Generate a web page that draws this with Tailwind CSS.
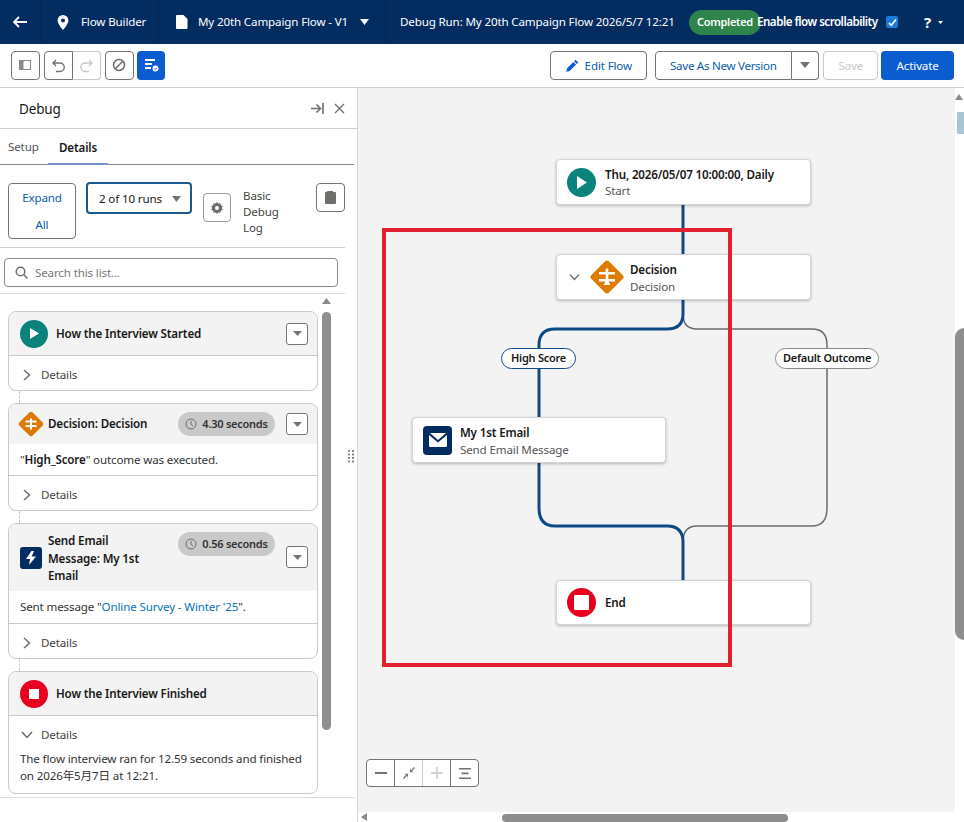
<!DOCTYPE html>
<html lang="en">
<head>
    <meta charset="UTF-8">
    <title>Flow Builder</title>
    <script src="https://cdn.jsdelivr.net/npm/@tailwindcss/browser@4"></script>
</head>
<body class="h-screen w-[964px] overflow-hidden bg-white font-['Noto_Sans','Noto_Sans_CJK_JP',sans-serif] text-[11.6px] tracking-[-0.15px] text-[#181818]">

    <!-- Top bar -->
    <header class="flex h-[44px] items-center bg-[#032d60] text-white">
        <div class="flex h-full w-[41px] shrink-0 items-center justify-center border-r border-[#0b2347]">
            <svg class="h-[16px] w-[16px]" viewBox="0 0 16 16" fill="none" stroke="white" stroke-width="1.8"><path d="M15 8H2M7 3L2 8l5 5"/></svg>
        </div>
        <div class="flex h-full w-[118px] shrink-0 items-center border-r border-[#0b2347] pl-[16px]">
            <svg class="h-[15px] w-[12px]" viewBox="0 0 12 15"><path fill="white" fill-rule="evenodd" d="M6 0a5.4 5.4 0 0 0-5.4 5.4C.6 9 6 15 6 15s5.400-6 5.400-9.600A5.400 5.400 0 0 0 6 0zm0 7.400a2 2 0 1 1 0-4 2 2 0 0 1 0 4z"/></svg>
            <span class="ml-[12px] whitespace-nowrap">Flow Builder</span>
        </div>
        <div class="flex h-full w-[227px] shrink-0 items-center border-r border-[#0b2347] pl-[17px]">
            <svg class="h-[14px] w-[12px]" viewBox="0 0 12 14"><path fill="white" d="M1 0h6.500L11.500 4v9a1 1 0 0 1-1 1H1a1 1 0 0 1-1-1V1a1 1 0 0 1 1-1z"/></svg>
            <span class="ml-[10px] whitespace-nowrap">My 20th Campaign Flow - V1</span>
            <svg class="ml-[12px] h-[6px] w-[9px]" viewBox="0 0 9 6"><path fill="white" d="M0 0h9L4.500 6z"/></svg>
        </div>
        <span class="ml-[14px] w-[289px] shrink-0 whitespace-nowrap">Debug Run: My 20th Campaign Flow 2026/5/7 12:21</span>
        <span class="flex h-[25px] w-[72px] shrink-0 items-center justify-center rounded-full bg-[#2e844a] text-[11px] font-semibold tracking-[-0.3px]">Completed</span>
        <span class="ml-[-4px] w-[129px] shrink-0 whitespace-nowrap font-semibold tracking-[-0.5px]">Enable flow scrollability</span>
        <span class="flex h-[12px] w-[12px] shrink-0 items-center justify-center rounded-[2px] bg-[#1b7ad6]">
            <svg class="h-[9px] w-[9px]" viewBox="0 0 9 9" fill="none" stroke="white" stroke-width="1.600"><path d="M1 5l2.300 2.300L8 1.500"/></svg>
        </span>
        <span class="ml-[26px] text-[15px] font-bold">?</span>
        <svg class="ml-[7px] h-[3px] w-[5px]" viewBox="0 0 5 3"><path fill="white" d="M0 0h5L2.500 3z"/></svg>
    </header>

    <!-- Toolbar -->
    <div class="flex h-[44px] items-center border-b border-[#cfcfcf] pb-[1px] pl-[11px] pr-[10px]">
        <button class="flex h-[29px] w-[29px] items-center justify-center rounded-[4px] border border-[#747474]">
            <svg class="h-[12px] w-[12px]" viewBox="0 0 12 12"><rect x="0.500" y="1.500" width="11" height="9" fill="none" stroke="#8a8a8a"/><rect x="1" y="2" width="3.500" height="8" fill="#8a8a8a"/></svg>
        </button>
        <button class="ml-[4px] flex h-[29px] w-[29px] items-center justify-center rounded-l-[4px] border border-[#747474]">
            <svg class="h-[15px] w-[15px]" viewBox="0 0 15 15" fill="none" stroke="#706e6b" stroke-width="1.300"><path d="M5 2L2 5l3 3M2 5h7a3.700 3.700 0 0 1 0 8.500H5"/></svg>
        </button>
        <button class="flex h-[29px] w-[28px] items-center justify-center rounded-r-[4px] border border-l-0 border-[#c9c9c9]">
            <svg class="h-[15px] w-[15px]" viewBox="0 0 15 15" fill="none" stroke="#c9c9c9" stroke-width="1.300"><path d="M10 2l3 3-3 3M13 5H6a3.700 3.700 0 0 0 0 8.500h4"/></svg>
        </button>
        <button class="ml-[4px] flex h-[29px] w-[29px] items-center justify-center rounded-[4px] border border-[#747474]">
            <svg class="h-[14px] w-[14px]" viewBox="0 0 14 14" fill="none" stroke="#706e6b" stroke-width="1.500"><circle cx="7" cy="7" r="5.500"/><path d="M3.200 10.800l7.600-7.600"/></svg>
        </button>
        <button class="ml-[3px] flex h-[29px] w-[29px] items-center justify-center rounded-[4px] bg-[#0b5cce]">
            <svg class="h-[15px] w-[15px]" viewBox="0 0 15 15"><path fill="white" d="M1 1h10v2H1zM1 5h7v2H1zM1 9h6v2H1z"/><circle cx="11.500" cy="10.500" r="3" fill="white"/><path d="M10 10.500l1 1 2-2" stroke="#0b5cce" fill="none"/></svg>
        </button>

        <button class="ml-[385px] flex h-[29px] w-[97px] items-center justify-center gap-[6px] rounded-[4px] border border-[#747474] pt-[1px] text-[#0b5cab]">
            <svg class="h-[13px] w-[13px]" viewBox="0 0 13 13"><path fill="#0b5cce" d="M9.500.8l2.700 2.700-1.400 1.400L8.100 2.200zM7.400 2.900l2.700 2.700-6.500 6.500L.3 12.700l.6-3.300z"/></svg>
            Edit Flow
        </button>
        <button class="ml-[8px] flex h-[29px] w-[137px] items-center justify-center rounded-l-[4px] border border-[#747474] pt-[1px] tracking-[-0.3px] text-[#0b5cab]">Save As New Version</button>
        <button class="flex h-[29px] w-[28px] items-center justify-center rounded-r-[4px] border border-l-0 border-[#747474]">
            <svg class="h-[6px] w-[10px]" viewBox="0 0 10 6"><path fill="#747474" d="M0 0h10L5 6z"/></svg>
        </button>
        <button class="ml-[4px] h-[29px] w-[55px] rounded-[4px] border border-[#c9c9c9] pt-[1px] text-[#c9c9c9]">Save</button>
        <button class="ml-[3px] h-[29px] w-[73px] rounded-[4px] bg-[#0b5cce] pt-[1px] text-white">Activate</button>
    </div>

    <div class="flex h-[734px]">
        <!-- Debug panel -->
        <aside class="relative h-full w-[358px] shrink-0 border-r border-[#d8d8d8]">
            <div class="flex h-[41px] items-center justify-between border-b border-[#cfcfcf] pl-[19px] pr-[12px]">
                <span class="pt-[2px] text-[13.5px]">Debug</span>
                <div class="flex items-center gap-[10px]">
                    <svg class="h-[11px] w-[13px]" viewBox="0 0 13 11" fill="none" stroke="#706e6b" stroke-width="1.600"><path d="M0 5.500h9M5.500 1.500l4 4-4 4M12 0v11"/></svg>
                    <svg class="h-[11px] w-[11px]" viewBox="0 0 11 11" fill="none" stroke="#706e6b" stroke-width="1.300"><path d="M1 1l9 9M10 1l-9 9"/></svg>
                </div>
            </div>
            <div class="mr-[3px] flex h-[36px] border-b border-[#8a8a8a]">
                <span class="flex w-[48px] items-center pl-[8px] text-[#555]">Setup</span>
                <span class="mb-[-1px] flex w-[60px] items-center justify-center border-b-[2px] border-[#7c93d6] pt-[4px] font-semibold">Details</span>
            </div>

            <div class="mr-[12px] flex h-[83px] items-start border-b border-[#d0d0d0]">
                <button class="ml-[8px] mt-[18px] h-[56px] w-[68px] rounded-[4px] border border-[#747474] leading-[27px] text-[#0b5cab]">Expand<br>All</button>
                <div class="ml-[10px] mt-[17px] flex h-[32px] w-[106px] items-center justify-between rounded-[4px] border-[2px] border-[#1b5a8e] pl-[11px] pr-[9px] pt-[1px]">
                    <span class="whitespace-nowrap">2 of 10 runs</span>
                    <svg class="h-[6px] w-[9px]" viewBox="0 0 9 6"><path fill="#747474" d="M0 0h9L4.500 6z"/></svg>
                </div>
                <button class="ml-[11px] mt-[28px] flex h-[29px] w-[28px] items-center justify-center rounded-[4px] border border-[#999]">
                    <svg class="h-[12px] w-[12px]" viewBox="0 0 12 12"><path fill="#706e6b" fill-rule="evenodd" d="M6 0l1.300 1.600 2-.4.600 2 1.900.8-.9 2 .9 2-1.900.8-.6 2-2-.4L6 12l-1.300-1.600-2 .4-.6-2-1.900-.8.900-2-.9-2 1.900-.8.600-2 2 .4zM6 4a2 2 0 1 0 0 4 2 2 0 0 0 0-4z"/></svg>
                </button>
                <div class="ml-[12px] mt-[23px] w-[50px] leading-[16px] text-[#444]">Basic Debug Log</div>
                <button class="ml-[23px] mt-[18px] flex h-[29px] w-[29px] items-center justify-center rounded-[4px] border border-[#747474]">
                    <svg class="h-[13px] w-[11px]" viewBox="0 0 11 13"><path fill="#706e6b" d="M3 0h5v1h2a1 1 0 0 1 1 1v10a1 1 0 0 1-1 1H1a1 1 0 0 1-1-1V2a1 1 0 0 1 1-1z"/></svg>
                </button>
            </div>

            <div class="mr-[12px] flex h-[46px] items-center border-b border-[#d8d8d8] pl-[4px] pt-[3px]">
                <div class="flex h-[29px] w-[334px] items-center rounded-[4px] border border-[#8a8a8a] pl-[10px]">
                    <svg class="h-[13px] w-[13px]" viewBox="0 0 13 13" fill="none" stroke="#706e6b" stroke-width="1.500"><circle cx="5.500" cy="5.500" r="4.300"/><path d="M8.800 8.800L12.500 12.500"/></svg>
                    <span class="ml-[7px] pt-[1px] text-[#777]">Search this list...</span>
                </div>
            </div>

            <!-- Event cards -->
            <div class="relative flex h-[503px] w-[318px] flex-col gap-[12px] pl-[8px] pt-[17px]">
                <section class="h-[80px] shrink-0 rounded-[8px] border border-[#c9c9c9]">
                    <div class="flex h-[44px] items-center rounded-t-[8px] border-b border-[#c9c9c9] bg-[#f3f3f3] pl-[11px] pr-[9px]">
                        <span class="flex h-[28px] w-[28px] shrink-0 items-center justify-center rounded-full bg-[#0b827c]">
                            <svg class="h-[11px] w-[9px]" viewBox="0 0 9 11"><path fill="white" d="M0 0l9 5.500L0 11z"/></svg>
                        </span>
                        <span class="ml-[8px] font-semibold">How the Interview Started</span>
                        <button class="ml-auto flex h-[22px] w-[22px] items-center justify-center rounded-[3px] border border-[#747474] bg-white">
                            <svg class="h-[5px] w-[9px]" viewBox="0 0 9 5"><path fill="#747474" d="M0 0h9L4.500 5z"/></svg>
                        </button>
                    </div>
                    <div class="flex h-[34px] items-center pl-[14px] pt-[4px] text-[#444]">
                        <svg class="h-[12px] w-[8px]" viewBox="0 0 8 12" fill="none" stroke="#706e6b" stroke-width="1.500"><path d="M1 1l5.500 5L1 11"/></svg>
                        <span class="ml-[10px]">Details</span>
                    </div>
                </section>

                <section class="h-[108px] shrink-0 rounded-[8px] border border-[#c9c9c9]">
                    <div class="flex h-[40px] items-center rounded-t-[8px] bg-[#f3f3f3] pl-[9px] pr-[9px]">
                        <svg class="h-[26px] w-[26px] shrink-0" viewBox="0 0 26 26"><rect x="3.750" y="3.750" width="18.500" height="18.500" rx="2" transform="rotate(45 13 13)" fill="#dd7a01"/><path fill="white" d="M7.500 9.500h11v2h-11zM7.500 14h11v2h-11zM12 7.500h2v2h-2zM12 11.500h2v2.500h-2zM12 16h2v2.500h-2z"/></svg>
                        <span class="ml-[4px] font-semibold">Decision: Decision</span>
                        <span class="ml-auto flex h-[24px] w-[97px] items-center justify-center gap-[5px] rounded-full bg-[#c9c9c9] text-[11px] font-semibold tracking-[-0.25px] text-[#333]">
                            <svg class="h-[12px] w-[12px]" viewBox="0 0 12 12" fill="none" stroke="#706e6b"><circle cx="6" cy="6" r="5"/><path d="M6 3v3l2 2"/></svg>
                            4.30 seconds
                        </span>
                        <button class="ml-[11px] flex h-[22px] w-[22px] items-center justify-center rounded-[3px] border border-[#747474] bg-white">
                            <svg class="h-[5px] w-[9px]" viewBox="0 0 9 5"><path fill="#747474" d="M0 0h9L4.500 5z"/></svg>
                        </button>
                    </div>
                    <div class="flex h-[32px] items-center border-b border-[#c9c9c9] pl-[11px] text-[#333]">"<b class="font-semibold text-[#181818]">High_Score</b>" outcome was executed.</div>
                    <div class="flex h-[34px] items-center pl-[14px] pt-[4px] text-[#444]">
                        <svg class="h-[12px] w-[8px]" viewBox="0 0 8 12" fill="none" stroke="#706e6b" stroke-width="1.500"><path d="M1 1l5.500 5L1 11"/></svg>
                        <span class="ml-[10px]">Details</span>
                    </div>
                </section>

                <section class="h-[136px] shrink-0 rounded-[8px] border border-[#c9c9c9]">
                    <div class="flex h-[67px] items-start rounded-t-[8px] bg-[#f3f3f3] pl-[11px] pr-[9px]">
                        <span class="mt-[23px] flex h-[22px] w-[22px] shrink-0 items-center justify-center rounded-[3px] bg-[#032d60]">
                            <svg class="h-[14px] w-[10px]" viewBox="0 0 10 14"><path fill="white" d="M5.500 0L0 8h4l-1 6 7-8.500H5.700L8 0z"/></svg>
                        </span>
                        <span class="ml-[6px] mt-[8px] w-[100px] font-semibold leading-[17.500px]">Send Email Message: My 1st Email</span>
                        <span class="ml-auto mt-[8px] flex h-[24px] w-[97px] items-center justify-center gap-[5px] rounded-full bg-[#c9c9c9] text-[11px] font-semibold tracking-[-0.25px] text-[#333]">
                            <svg class="h-[12px] w-[12px]" viewBox="0 0 12 12" fill="none" stroke="#706e6b"><circle cx="6" cy="6" r="5"/><path d="M6 3v3l2 2"/></svg>
                            0.56 seconds
                        </span>
                        <button class="ml-[11px] mt-[22px] flex h-[22px] w-[22px] items-center justify-center rounded-[3px] border border-[#747474] bg-white">
                            <svg class="h-[5px] w-[9px]" viewBox="0 0 9 5"><path fill="#747474" d="M0 0h9L4.500 5z"/></svg>
                        </button>
                    </div>
                    <div class="flex h-[33px] items-center border-b border-[#c9c9c9] pl-[11px] text-[#333]">Sent message "<span class="text-[#0b73b8]">Online Survey - Winter '25</span>".</div>
                    <div class="flex h-[34px] items-center pl-[14px] pt-[4px] text-[#444]">
                        <svg class="h-[12px] w-[8px]" viewBox="0 0 8 12" fill="none" stroke="#706e6b" stroke-width="1.500"><path d="M1 1l5.500 5L1 11"/></svg>
                        <span class="ml-[10px]">Details</span>
                    </div>
                </section>

                <section class="h-[123px] shrink-0 rounded-[8px] border border-[#c9c9c9]">
                    <div class="flex h-[44px] items-center rounded-t-[8px] border-b border-[#c9c9c9] bg-[#f3f3f3] pl-[11px]">
                        <span class="flex h-[28px] w-[28px] shrink-0 items-center justify-center rounded-full bg-[#ea001e]">
                            <span class="h-[10px] w-[10px] bg-white"></span>
                        </span>
                        <span class="ml-[8px] font-semibold">How the Interview Finished</span>
                    </div>
                    <div class="flex h-[34px] items-center pl-[12px] pt-[4px] text-[#444]">
                        <svg class="h-[8px] w-[12px]" viewBox="0 0 12 8" fill="none" stroke="#706e6b" stroke-width="1.500"><path d="M1 1l5 5.500L11 1"/></svg>
                        <span class="ml-[8px]">Details</span>
                    </div>
                    <p class="pl-[11px] pr-[10px] leading-[17px] text-[#333]">The flow interview ran for 12.59 seconds and finished on 2026年5月7日 at 12:21.</p>
                </section>

                <!-- dashed links between the cards -->
                <span class="absolute left-[19px] top-[97px] h-[12px] border-l border-dashed border-[#c9c9c9]"></span>
                <span class="absolute left-[19px] top-[217px] h-[12px] border-l border-dashed border-[#c9c9c9]"></span>
                <span class="absolute left-[19px] top-[365px] h-[12px] border-l border-dashed border-[#c9c9c9]"></span>
            </div>

            <!-- list scrollbar -->
            <svg class="absolute left-[322px] top-[210px] h-[6px] w-[9px]" viewBox="0 0 9 6"><path fill="#8a8a8a" d="M0 6h9L4.500 0z"/></svg>
            <div class="absolute left-[322px] top-[224px] h-[418px] w-[9px] rounded-full bg-[#8e8e8e]"></div>
            <div class="absolute bottom-[24px] left-0 w-[355px] border-t border-[#dcdcdc]"></div>

            <!-- resize grip -->
            <svg class="absolute left-[348px] top-[362px] h-[13px] w-[7px]" viewBox="0 0 7 13"><path fill="#8a8a8a" d="M0 0h2v2H0zM4 0h2v2H4zM0 3.500h2v2H0zM4 3.500h2v2H4zM0 7h2v2H0zM4 7h2v2H4zM0 10.500h2v2H0zM4 10.500h2v2H4z"/></svg>
        </aside>

        <!-- Canvas -->
        <main class="relative h-full flex-1 overflow-hidden bg-[#f3f3f3]">
            <svg class="absolute inset-0" width="606" height="734" fill="none">
                <path d="M325 226Q325 241 339 241H454Q469 241 469 257V420Q469 438 454 438H339Q325 438 325 454" stroke="#6b6b6b" stroke-width="1.500"/>
                <path d="M325 117V226Q325 241 309 241H197Q181 241 181 257V420Q181 438 197 438H309Q325 438 325 454V493" stroke="#0d4a85" stroke-width="3"/>
            </svg>

            <!-- nodes -->
            <div class="absolute left-[198px] top-[71px] flex h-[46px] w-[255px] items-center rounded-[4px] border border-[#d4d4d4] bg-white pl-[10px] shadow-[0_1px_3px_rgba(0,0,0,0.25)]">
                <span class="flex h-[29px] w-[29px] items-center justify-center rounded-full bg-[#0b827c]">
                    <svg class="h-[13px] w-[10px]" viewBox="0 0 10 13"><path fill="white" d="M0 0l10 6.500L0 13z"/></svg>
                </span>
                <div class="ml-[9px] pt-[1px] leading-[16px]">
                    <div class="whitespace-nowrap font-semibold">Thu, 2026/05/07 10:00:00, Daily</div>
                    <div class="text-[#555]">Start</div>
                </div>
            </div>

            <div class="absolute left-[198px] top-[166px] flex h-[46px] w-[255px] items-center rounded-[4px] border border-[#d4d4d4] bg-white pl-[12px] shadow-[0_1px_3px_rgba(0,0,0,0.25)]">
                <svg class="h-[8px] w-[11px]" viewBox="0 0 11 8" fill="none" stroke="#706e6b" stroke-width="1.200"><path d="M1 1.500l4.500 5 4.500-5"/></svg>
                <svg class="ml-[9px] h-[36px] w-[36px]" viewBox="0 0 36 36"><rect x="5.500" y="5.500" width="25" height="25" rx="3" transform="rotate(45 18 18)" fill="#dd7a01"/><path fill="white" d="M10 13h16v2.600H10zM10 20h16v2.600H10zM16.700 9.500h2.600v3.500h-2.600zM16.700 15.600h2.600V20h-2.600zM14.500 26h7l-2-3.400h-3z"/></svg>
                <div class="ml-[5px] pt-[1px] leading-[17px]">
                    <div class="font-semibold">Decision</div>
                    <div class="text-[#555]">Decision</div>
                </div>
            </div>

            <div class="absolute left-[54px] top-[329px] flex h-[46px] w-[254px] items-center rounded-[4px] border border-[#d4d4d4] bg-white pl-[10px] shadow-[0_1px_3px_rgba(0,0,0,0.25)]">
                <span class="flex h-[29px] w-[29px] items-center justify-center rounded-[4px] bg-[#032d60]">
                    <svg class="h-[14px] w-[18px]" viewBox="0 0 18 14"><path fill="white" d="M1 0h16L9 7zM0 2l9 7.500L18 2v11a1 1 0 0 1-1 1H1a1 1 0 0 1-1-1z"/></svg>
                </span>
                <div class="ml-[8px] pt-[1px] leading-[17px]">
                    <div class="font-semibold">My 1st Email</div>
                    <div class="text-[#555]">Send Email Message</div>
                </div>
            </div>

            <div class="absolute left-[198px] top-[492px] flex h-[45px] w-[255px] items-center rounded-[4px] border border-[#d4d4d4] bg-white pl-[10px] shadow-[0_1px_3px_rgba(0,0,0,0.25)]">
                <span class="flex h-[29px] w-[29px] items-center justify-center rounded-full bg-[#ea001e]">
                    <span class="h-[15px] w-[15px] rounded-[1px] bg-white"></span>
                </span>
                <span class="ml-[9px] font-semibold">End</span>
            </div>

            <!-- outcome labels -->
            <span class="absolute left-[143px] top-[260px] flex h-[21px] w-[75px] items-center justify-center rounded-full border border-[#0d4a85] bg-white pb-[1px] text-[11px] font-semibold tracking-[-0.25px]">High Score</span>
            <span class="absolute left-[417px] top-[260px] flex h-[21px] w-[104px] items-center justify-center rounded-full border border-[#8a8a8a] bg-white pb-[1px] text-[11px] font-semibold tracking-[-0.25px]">Default Outcome</span>

            <!-- annotation -->
            <div class="absolute left-[24px] top-[140px] h-[439px] w-[350px] border-[4px] border-[#e3202f]"></div>

            <!-- zoom controls -->
            <div class="absolute left-[8px] top-[671px] flex h-[28px] w-[113px] rounded-[4px] border border-[#747474] bg-white">
                <span class="flex w-[28px] items-center justify-center border-r border-[#747474]">
                    <svg class="h-[2px] w-[12px]" viewBox="0 0 12 2"><path fill="#747474" d="M0 0h12v2H0z"/></svg>
                </span>
                <span class="flex w-[28px] items-center justify-center border-r border-[#c9c9c9]">
                    <svg class="h-[12px] w-[12px]" viewBox="0 0 12 12"><path fill="#747474" d="M12 1L8.800 4.200 11 5.200H7V1.200l1 2.100L11.100 0zM0 11l3.200-3.200L1 6.800h4v4l-1-2.100L.9 12z"/></svg>
                </span>
                <span class="flex w-[28px] items-center justify-center border-r border-[#747474]">
                    <svg class="h-[12px] w-[12px]" viewBox="0 0 12 12"><path fill="#c9c9c9" d="M5.300 0h1.400v5.300H12v1.400H6.700V12H5.300V6.700H0V5.300h5.300z"/></svg>
                </span>
                <span class="flex flex-1 items-center justify-center">
                    <svg class="h-[11px] w-[12px]" viewBox="0 0 12 11"><path fill="#747474" d="M0 0h12v1.600H0zM2.500 4.600h7v1.600h-7zM0 9.400h12V11H0z"/></svg>
                </span>
            </div>

            <!-- canvas scrollbars -->
            <div class="absolute right-0 top-0 h-full w-[9px] bg-white"></div>
            <svg class="absolute right-[1px] top-[6px] h-[6px] w-[8px]" viewBox="0 0 8 6"><path fill="#8a8a8a" d="M0 6h8L4 0z"/></svg>
            <div class="absolute right-0 top-[22px] h-[26px] w-[9px] rounded-l-[3px] border-[2px] border-r-0 border-white bg-[#a9c4d2]"></div>
            <div class="absolute right-0 top-[240px] h-[312px] w-[9px] rounded-l-full bg-[#8e8e8e]"></div>
            <div class="absolute bottom-0 left-0 h-[10px] w-full bg-white"></div>
            <svg class="absolute bottom-[1px] left-[3px] h-[8px] w-[6px]" viewBox="0 0 6 8"><path fill="#8a8a8a" d="M6 0v8L0 4z"/></svg>
            <div class="absolute bottom-0 left-[144px] h-[8px] w-[286px] rounded-full bg-[#8e8e8e]"></div>
        </main>
    </div>
</body>
</html>
